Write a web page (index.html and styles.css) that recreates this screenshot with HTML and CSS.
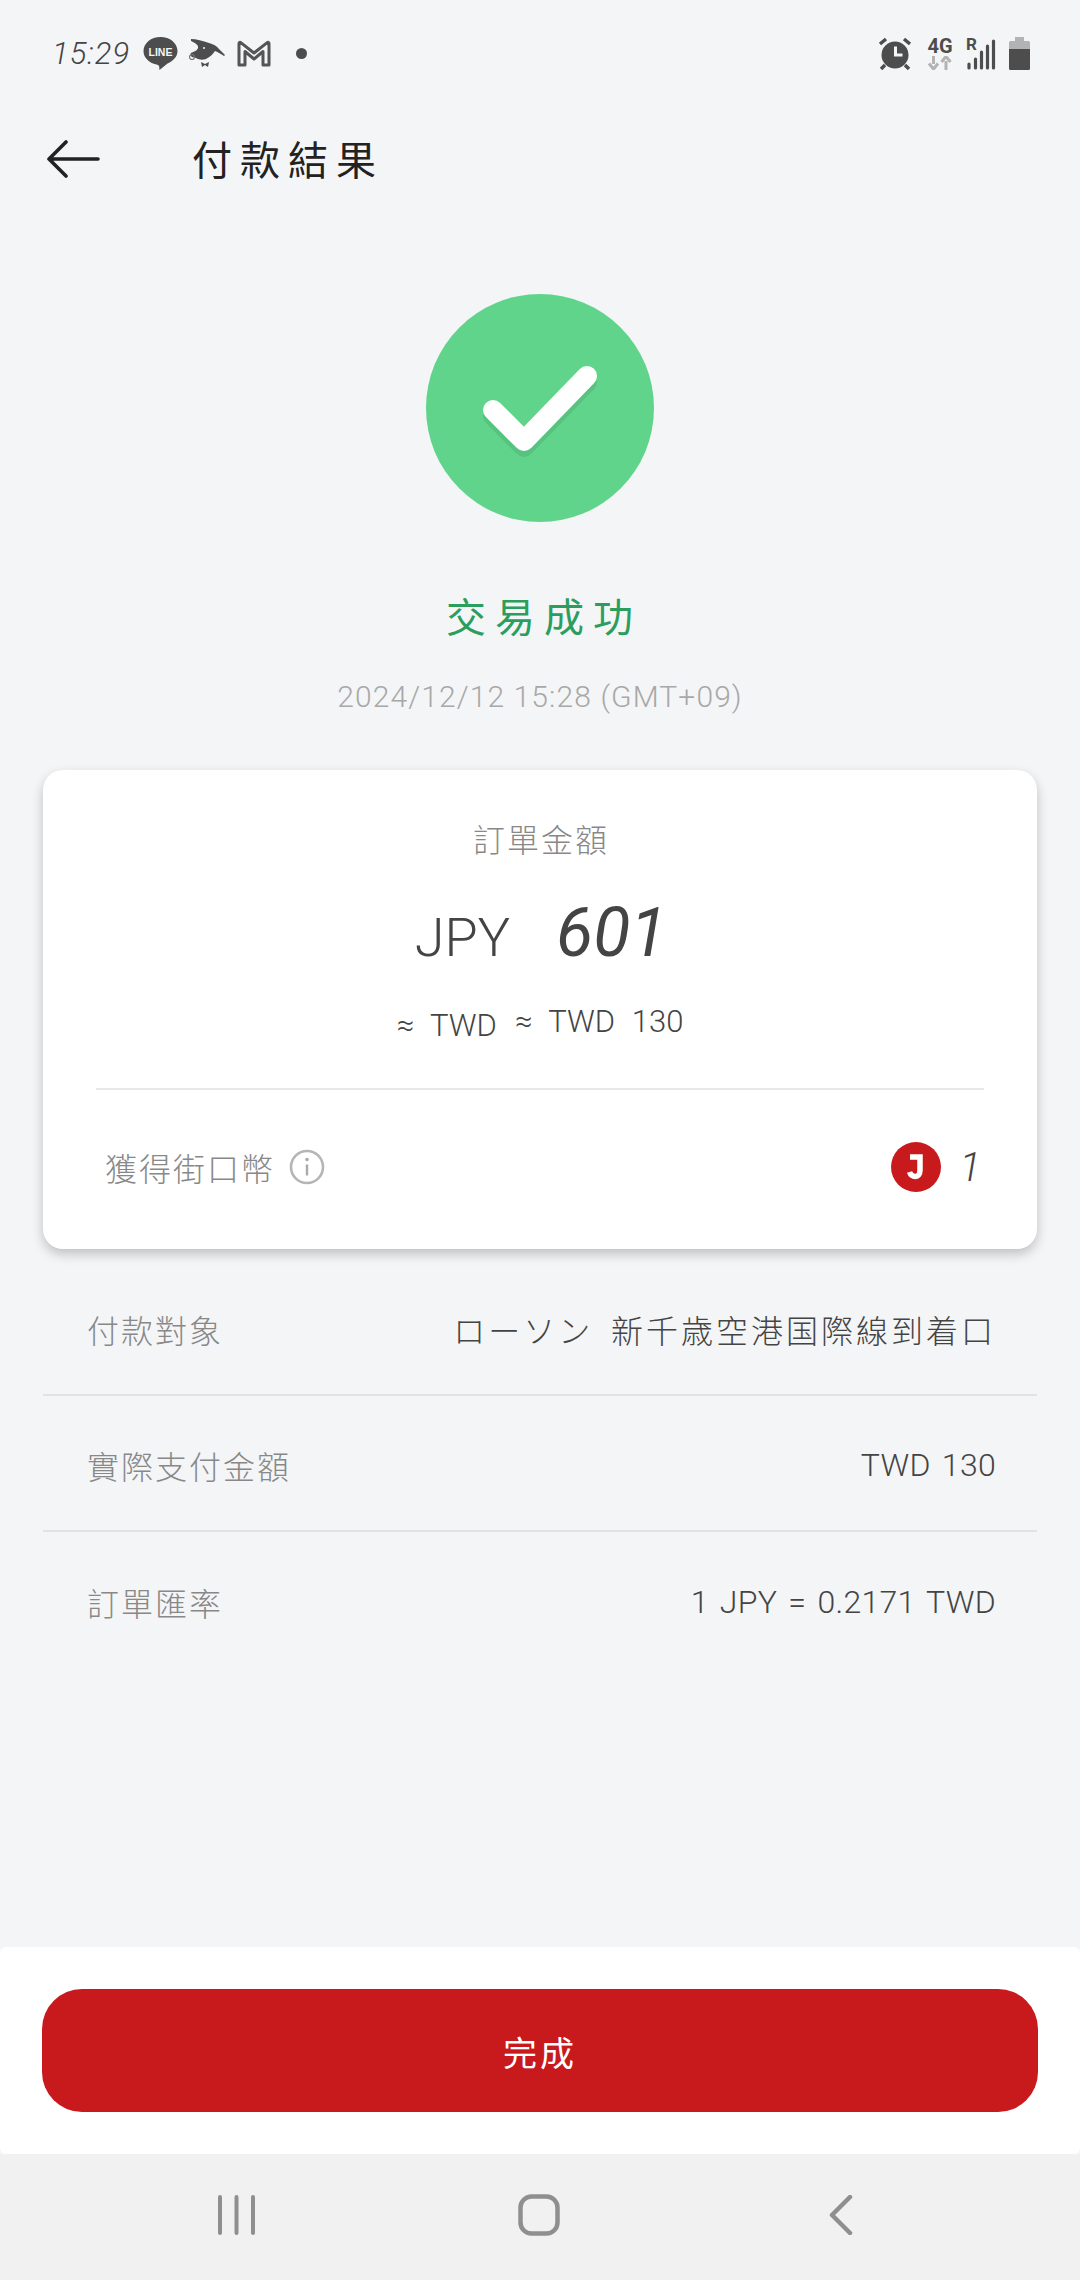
FILE: index.html
```html
<!DOCTYPE html>
<html lang="zh-Hant">
<head>
    <meta charset="UTF-8">
    <meta name="viewport" content="width=device-width, initial-scale=1.0">
    <title>付款結果</title>
    <link rel="stylesheet" href="styles.css">
</head>
<body>
    <div class="page">
        <div class="status-bar">
            <span class="time">15:29</span>
            <div class="line-badge">
                <svg width="35" height="33" viewBox="0 0 34 33">
                    <path d="M17 0C7.600 0 0 6.200 0 14c0 6.600 5.400 11.800 13 13.600 1 .3 2 .6 2.600 1.400l.4 4 8-6.600C30 24 34 19.500 34 14 34 6.200 26.400 0 17 0z" fill="#4d4d4d"/>
                </svg>
                <span class="line-text">LINE</span>
            </div>
            <svg class="ico-bird" width="36" height="28" viewBox="0 0 36 28">
                <path d="M2 0c5 0 12 2 18 4 4 1 8 3 10 6 2 2 4 4 6 6l-1 1c-3-2-6-4-9-5 -2 3-5 6-9 8-3 1-7 1-10-1l-4-1c-2-1-2-3-1-4 2-1 6-2 7-5C10 6 6 4 2 2z" fill="#4d4d4d"/>
                <circle cx="3" cy="18" r="2.500" fill="none" stroke="#777" stroke-width="1.200"/>
                <circle cx="15" cy="9" r="1" fill="#f4f5f7"/>
                <path d="M12 23l4 2 4-2-1 5-3-2-3 2z" fill="#4d4d4d"/>
            </svg>
            <svg class="ico-mail" width="34" height="27" viewBox="0 0 34 27">
                <path d="M2 25V3.500c0-1.200 1-1.500 1.800-.9L17 13 30.200 2.600c.8-.6 1.800-.3 1.800.9V25h-6V11.500L17 19 8 11.500V25z" fill="none" stroke="#555" stroke-width="3" stroke-linejoin="round"/>
            </svg>
            <span class="status-dot"></span>
            <div class="status-right">
                <svg class="ico-alarm" width="34" height="33" viewBox="0 0 34 33">
                    <circle cx="17" cy="18" r="13.500" fill="#4d4d4d"/>
                    <path d="M16 9.500v10h8.500v-3H19v-7z" fill="#f4f5f7"/>
                    <path d="M2 7l6-5M32 7l-6-5M7 28l-4 4M27 28l4 4" stroke="#4d4d4d" stroke-width="3.500" fill="none"/>
                </svg>
                <div class="net">
                    <span class="net-label">4G</span>
                    <svg width="24" height="14" viewBox="0 0 24 14">
                        <path d="M5.500 0v8M1 7.500l4.500 5.500L10 7.500" fill="none" stroke="#b3b3b3" stroke-width="3"/>
                        <path d="M18 14V5M13.500 6L18 .5 22.500 6" fill="none" stroke="#b3b3b3" stroke-width="3"/>
                    </svg>
                </div>
                <div class="signal">
                    <span class="signal-text">R</span>
                    <svg width="30" height="33" viewBox="0 0 30 33">
                        <g stroke="#4d4d4d" stroke-width="3.200" stroke-linecap="round" fill="none">
                            <path d="M3 27v4"/>
                            <path d="M9.500 22v9"/>
                            <path d="M15.500 15v16"/>
                            <path d="M21.500 9v22"/>
                            <path d="M27.500 4v27"/>
                        </g>
                    </svg>
                </div>
                <svg width="21" height="33" viewBox="0 0 21 33">
                    <path d="M6 0h9v4H6z" fill="#b3b3b3"/>
                    <path d="M1.500 4h18A1.500 1.500 0 0 1 21 5.500V12H0V5.500A1.500 1.500 0 0 1 1.500 4z" fill="#b3b3b3"/>
                    <path d="M0 12h21v19.500a1.500 1.500 0 0 1-1.500 1.500h-18A1.500 1.500 0 0 1 0 31.500z" fill="#4d4d4d"/>
                </svg>
            </div>
        </div>

        <div class="app-bar">
            <svg class="back" width="54" height="40" viewBox="0 0 54 40">
                <path d="M3 19h49M20 2L3 19l17 17" fill="none" stroke="#222" stroke-width="3.600" stroke-linecap="round" stroke-linejoin="round"/>
            </svg>
            <h1 class="page-title">付款結果</h1>
        </div>

        <div class="main">
            <div class="result">
                <svg width="228" height="228" viewBox="0 0 228 228">
                    <circle cx="114" cy="114" r="114" fill="#60d48a"/>
                    <path d="M67 122l31 31 63-65" fill="none" stroke="#58c380" stroke-width="20" stroke-linecap="round" stroke-linejoin="round"/>
                    <path d="M67 116l31 31 63-65" fill="none" stroke="#fff" stroke-width="20" stroke-linecap="round" stroke-linejoin="round"/>
                </svg>
                <div class="result-title">交易成功</div>
                <div class="result-date">2024/12/12 15:28 (GMT+09)</div>
            </div>

            <div class="card">
                <div class="card-top">
                    <div class="amount-label">訂單金額</div>
                    <div class="amount"><span class="amount-cur">JPY</span><span class="amount-num">601</span></div>
                    <div class="approx"><span class="approx-low">≈ TWD</span><span>≈ TWD 130</span></div>
                </div>
                <div class="card-bottom">
                    <div class="points-label">
                        <span>獲得街口幣</span>
                        <svg width="36" height="36" viewBox="0 0 36 36">
                            <circle cx="18" cy="18" r="16" fill="none" stroke="#b5b5b5" stroke-width="2.600"/>
                            <circle cx="18" cy="10.500" r="1.800" fill="#aaa"/>
                            <path d="M18 15.500v11" stroke="#aaa" stroke-width="2.400" fill="none"/>
                        </svg>
                    </div>
                    <div class="points-value">
                        <svg width="50" height="50" viewBox="0 0 50 50">
                            <circle cx="25" cy="25" r="25" fill="#c8191c"/>
                            <path d="M19 15h10v13c0 4.500-2 6.500-4.500 6.500s-5-1.500-6-4.500" fill="none" stroke="#fff" stroke-width="5.500"/>
                        </svg>
                        <span class="points-num">1</span>
                    </div>
                </div>
            </div>

            <div class="details">
                <div class="detail-row">
                    <span class="detail-label">付款對象</span>
                    <span class="detail-value">ローソン 新千歳空港国際線到着口</span>
                </div>
                <div class="detail-row">
                    <span class="detail-label">實際支付金額</span>
                    <span class="detail-value detail-num">TWD 130</span>
                </div>
                <div class="detail-row">
                    <span class="detail-label">訂單匯率</span>
                    <span class="detail-value detail-num">1 JPY = 0.2171 TWD</span>
                </div>
            </div>
        </div>

        <div class="footer">
            <button class="done-btn">完成</button>
        </div>

        <div class="nav-bar">
            <svg width="39" height="40" viewBox="0 0 39 40">
                <path d="M3 2v36M19.500 2v36M36 2v36" stroke="#8f8f8f" stroke-width="4" stroke-linecap="round" fill="none"/>
            </svg>
            <svg class="nav-home" width="42" height="42" viewBox="0 0 42 42">
                <rect x="2.500" y="2.500" width="37" height="37" rx="11" fill="none" stroke="#8f8f8f" stroke-width="4.500"/>
            </svg>
            <svg class="nav-back" width="24" height="40" viewBox="0 0 24 40">
                <path d="M21 2L3 20l18 18" stroke="#8f8f8f" stroke-width="4.500" stroke-linecap="round" stroke-linejoin="round" fill="none"/>
            </svg>
        </div>
    </div>
</body>
</html>
```

FILE: styles.css
```css
* {
    box-sizing: border-box;
}
body {
    margin: 0;
    background: #f4f5f7;
    font-family: Roboto, "Noto Sans CJK TC", sans-serif;
    font-weight: 300;
}
.page {
    width: 1080px;
    height: 2280px;
    display: flex;
    flex-direction: column;
    overflow: hidden;
}

/* status bar */
.status-bar {
    height: 106px;
    padding: 0 50px 0 52px;
    display: flex;
    align-items: center;
}
.time {
    font-size: 31px;
    font-style: italic;
    color: #444;
    letter-spacing: 1px;
    width: 91px;
}
.line-badge {
    position: relative;
    width: 35px;
    height: 33px;
    margin-right: 11px;
}
.line-text {
    position: absolute;
    left: 0;
    right: 0;
    top: 8px;
    font: 700 10.500px/14px "Liberation Sans", sans-serif;
    color: #f4f5f7;
    text-align: center;
}
.ico-bird {
    margin-right: 12px;
}
.status-dot {
    width: 11px;
    height: 11px;
    border-radius: 50%;
    background: #4d4d4d;
    margin-left: 25px;
}
.status-right {
    margin-left: auto;
    display: flex;
    align-items: center;
    gap: 13px;
}
.ico-alarm {
    margin-right: 2px;
}
.net {
    width: 26px;
    display: flex;
    flex-direction: column;
    align-items: center;
}
.net-label {
    font: 700 20px/20px Roboto, sans-serif;
    color: #4d4d4d;
}
.signal {
    position: relative;
    width: 30px;
    height: 33px;
}
.signal-text {
    position: absolute;
    left: 0;
    top: -1px;
    font: 700 17px/17px Roboto, sans-serif;
    color: #4d4d4d;
}

/* app bar */
.app-bar {
    height: 108px;
    padding-left: 46px;
    display: flex;
    align-items: center;
}
.back {
    margin-right: 92px;
}
.page-title {
    margin: 0 0 5px;
    font-size: 40px;
    font-weight: 400;
    letter-spacing: 8px;
    color: #222;
}

.main {
    flex: 1;
}

/* result */
.result {
    padding-top: 80px;
    display: flex;
    flex-direction: column;
    align-items: center;
}
.result-title {
    margin-top: 67px;
    padding-left: 8px;
    font-size: 40px;
    line-height: 60px;
    letter-spacing: 9px;
    color: #2b9d5d;
    font-weight: 400;
}
.result-date {
    margin-top: 28px;
    font-size: 30px;
    line-height: 40px;
    letter-spacing: 1.100px;
    color: #a8a8a8;
}

/* card */
.card {
    margin: 53px 43px 0;
    height: 479px;
    background: #fff;
    border-radius: 20px;
    box-shadow: 0 5px 12px rgba(0, 0, 0, 0.22);
    padding: 0 53px;
    display: flex;
    flex-direction: column;
}
.card-top {
    height: 320px;
    border-bottom: 2px solid #e8e8e8;
    display: flex;
    flex-direction: column;
    align-items: center;
}
.amount-label {
    margin-top: 49px;
    padding-left: 2px;
    font-size: 32px;
    line-height: 44px;
    letter-spacing: 2px;
    color: #888;
}
.amount {
    margin-top: 30px;
    padding-left: 2px;
    height: 80px;
    display: flex;
    align-items: baseline;
    gap: 46px;
    color: #444;
}
.amount-cur {
    font-size: 54px;
}
.amount-num {
    font-size: 68px;
    font-weight: 400;
    font-style: italic;
}
.approx {
    margin-top: 29px;
    font-size: 31px;
    line-height: 40px;
    word-spacing: 9px;
    color: #444;
    display: flex;
    gap: 18px;
}
.approx-low {
    position: relative;
    top: 4px;
}
.card-bottom {
    flex: 1;
    padding: 0 3px 5px 9px;
    display: flex;
    align-items: center;
    justify-content: space-between;
}
.points-label {
    display: flex;
    align-items: center;
    gap: 14px;
    font-size: 32px;
    letter-spacing: 2px;
    color: #888;
}
.points-value {
    display: flex;
    align-items: center;
    gap: 18px;
}
.points-num {
    font-size: 40px;
    font-style: italic;
    color: #444;
}

/* details */
.details {
    margin: 11px 43px 0;
}
.detail-row {
    height: 136px;
    padding: 3px 41px 0 44px;
    border-bottom: 2px solid #e2e3e5;
    display: flex;
    align-items: center;
    justify-content: space-between;
}
.detail-row:last-child {
    border-bottom: 0;
}
.detail-label {
    font-size: 32px;
    letter-spacing: 2px;
    color: #888;
}
.detail-value {
    font-size: 32px;
    letter-spacing: 3px;
    word-spacing: 7px;
    color: #444;
}
.detail-num {
    letter-spacing: 0.300px;
    word-spacing: 3px;
}

/* bottom */
.footer {
    height: 207px;
    background: #fff;
    border-radius: 6px;
    padding: 42px;
}
.done-btn {
    display: block;
    width: 100%;
    height: 123px;
    border: 0;
    border-radius: 40px;
    background: #c8191c;
    color: #fff;
    font-family: inherit;
    font-size: 34px;
    letter-spacing: 3px;
    padding: 2px 0 0;
}
.nav-bar {
    height: 126px;
    background: #f1f1f1;
    padding: 0 0 5px 217px;
    display: flex;
    align-items: center;
}
.nav-home {
    margin-left: 262px;
}
.nav-back {
    margin-left: 269px;
}
```
